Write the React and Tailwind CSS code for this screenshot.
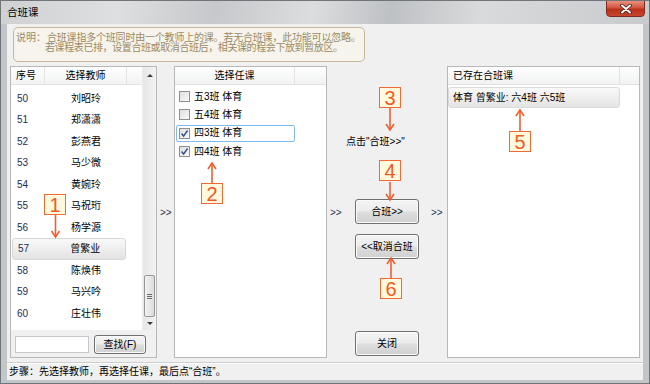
import React from "react";

const teachers = [
  ["50", "刘昭玲"],
  ["51", "郑潇潇"],
  ["52", "彭燕君"],
  ["53", "马少微"],
  ["54", "黄婉玲"],
  ["55", "马祝珩"],
  ["56", "杨学源"],
  ["57", "曾繁业"],
  ["58", "陈焕伟"],
  ["59", "马兴吟"],
  ["60", "庄壮伟"],
];

const courses = [
  { label: "五3班 体育", checked: false },
  { label: "五4班 体育", checked: false },
  { label: "四3班 体育", checked: true, focus: true },
  { label: "四4班 体育", checked: true },
];

function Btn({ children, className }) {
  return (
    <div
      className={`flex items-center justify-center rounded-[3px] border border-[#707070] bg-[linear-gradient(#f4f4f4_0%,#ececec_48%,#dedede_52%,#d0d0d0_100%)] shadow-[inset_0_0_0_1px_#fbfbfb] text-[10px] leading-none text-black ${className}`}
    >
      {children}
    </div>
  );
}

function Checkbox({ checked }) {
  return (
    <div className="w-[11px] h-[11px] border border-[#8e8f8f] bg-[linear-gradient(135deg,#e0e0e0,#f8f8f8)] flex items-center justify-center">
      {checked && (
        <svg width="9" height="9" viewBox="0 0 9 9">
          <path d="M1.5 4.5 L3.6 7 L7.6 1.5" fill="none" stroke="#30528f" strokeWidth="1.4" />
        </svg>
      )}
    </div>
  );
}

function Header({ children }) {
  return (
    <div className="h-[18px] flex bg-[linear-gradient(#ffffff,#f1f2f3)] border-b border-[#e2e2e2] text-[10px] text-black leading-none">
      {children}
    </div>
  );
}

function Callout({ n, className }) {
  return (
    <div
      className={`absolute w-[22px] h-[21px] border-[1.5px] border-[#f06a35] bg-[#fff9de] flex items-center justify-center text-[20px] leading-none text-[#f05a25] font-['Liberation_Sans',sans-serif] ${className}`}
    >
      {n}
    </div>
  );
}

function Arrow({ x, from, to }) {
  const dir = to > from ? 1 : -1;
  return (
    <g stroke="#f15f2e" strokeWidth="1.6" fill="none">
      <line x1={x} y1={from} x2={x} y2={to} />
      <polyline points={`${x - 4},${to - dir * 6} ${x},${to} ${x + 4},${to - dir * 6}`} />
    </g>
  );
}

export default function App() {
  return (
    <div className="relative w-[650px] h-[384px] overflow-hidden bg-[#c3c6c9] border border-[#70757a] font-['Liberation_Sans','Noto_Sans_CJK_SC',sans-serif] text-black">
      {/* title bar */}
      <div className="h-[23px] flex justify-between pl-[6px] pr-[4px] bg-[linear-gradient(100deg,#cfd1d3_0%,#dedfe0_18%,#c6c8cb_33%,#dcdddf_48%,#bec1c4_60%,#d9dadc_74%,#c8cacd_100%)]">
        <div className="pt-[6px] text-[10.5px] leading-none">合班课</div>
        <div className="self-start w-[39px] h-[17px] -mt-[1px] rounded-b-[4px] border border-[#7b2b20] bg-[linear-gradient(#e8917e_0%,#d3553e_45%,#b8301c_55%,#c9442c_100%)] flex items-center justify-center">
          <svg width="12" height="10" viewBox="0 0 12 10">
            <path d="M2 1.5 L10 8.5 M10 1.5 L2 8.5" stroke="#4a1c14" strokeWidth="3.6" strokeLinecap="round" />
            <path d="M2 1.5 L10 8.5 M10 1.5 L2 8.5" stroke="#ffffff" strokeWidth="2" strokeLinecap="round" />
          </svg>
        </div>
      </div>

      {/* client */}
      <div className="ml-[6px] w-[636px] h-[356px] bg-[#f0f0f0] flex flex-col">
        {/* info */}
        <div className="ml-[6px] mt-[3px] w-[352px] h-[35px] rounded-[5px] border border-[#c7b995] bg-[#f6f4ec] flex pl-[2px] pt-[5px] text-[10px] leading-[10px] text-[#9c8a64] whitespace-nowrap">
          <div className="w-[31px]">说明：</div>
          <div className="flex flex-col tracking-[-0.2px]">
            <div>合班课指多个班同时由一个教师上的课。若无合班课，此功能可以忽略。</div>
            <div className="-ml-[2px] tracking-[-0.4px]">若课程表已排，设置合班或取消合班后，相关课的程会下放到暂放区。</div>
          </div>
        </div>

        {/* main row */}
        <div className="mt-[4px] h-[292px] flex">
          {/* left panel */}
          <div className="ml-[3px] w-[147px] h-full border border-[#b8b8b8] flex flex-col">
            <div className="h-[263px] flex">
              <div className="w-[131px] bg-white flex flex-col">
                <Header>
                  <div className="w-[34px] pl-[5px] flex items-center border-r border-[#e3e3e3]">序号</div>
                  <div className="w-[82px] flex items-center justify-center border-r border-[#e3e3e3]">选择教师</div>
                  <div className="flex-1" />
                </Header>
                <div className="pt-[2.5px] flex flex-col">
                  {teachers.map(([no, name]) =>
                    no === "57" ? (
                      <div key={no} className="h-[21.5px] flex items-center ml-[1px] w-[114px] rounded-[3px] border border-[#d8d8d8] bg-[linear-gradient(#f9f9f9,#e3e3e3)]">
                        <div className="w-[33px] pl-[5px] text-[10px] text-[#1f2b52]">{no}</div>
                        <div className="w-[80px] text-center text-[10px]">{name}</div>
                      </div>
                    ) : (
                      <div key={no} className="h-[21.5px] flex items-center">
                        <div className="w-[34px] pl-[6px] text-[10px] text-[#1f2b52]">{no}</div>
                        <div className="w-[82px] text-center text-[10px]">{name}</div>
                      </div>
                    )
                  )}
                </div>
              </div>
              {/* scrollbar */}
              <div className="w-[14px] flex flex-col bg-[linear-gradient(90deg,#e6e6e6,#f3f3f3)] border-l border-[#ececec]">
                <div className="h-[16px] flex items-center justify-center">
                  <div className="w-0 h-0 border-l-[3px] border-r-[3px] border-b-[3px] border-l-transparent border-r-transparent border-b-[#3a3a3a]" />
                </div>
                <div className="h-[192px]" />
                <div className="h-[42px] mx-[1px] rounded-[2px] border border-[#979797] bg-[linear-gradient(90deg,#f2f2f2,#dcdcdc)] flex flex-col items-center justify-center gap-[1px]">
                  <div className="w-[5px] h-px bg-[#6a6a6a]" />
                  <div className="w-[5px] h-px bg-[#6a6a6a]" />
                  <div className="w-[5px] h-px bg-[#6a6a6a]" />
                </div>
                <div className="flex-1 flex items-center justify-center">
                  <div className="w-0 h-0 border-l-[3px] border-r-[3px] border-t-[3px] border-l-transparent border-r-transparent border-t-[#3a3a3a]" />
                </div>
              </div>
            </div>
            <div className="flex-1 flex items-start">
              <div className="ml-[4px] mt-[6px] w-[74px] h-[17px] border border-[#c4c7cc] bg-white" />
              <Btn className="ml-[5px] mt-[5px] w-[52px] h-[19px]">查找(F)</Btn>
            </div>
          </div>

          {/* >> */}
          <div className="w-[17px] pl-[3px] pt-[142px] text-[10px] leading-[10px] text-[#2a3550]">&gt;&gt;</div>

          {/* middle panel */}
          <div className="w-[153px] h-full border border-[#b8b8b8] bg-white flex flex-col">
            <Header>
              <div className="w-[120px] flex items-center justify-center border-r border-[#e3e3e3]">选择任课</div>
              <div className="flex-1" />
            </Header>
            <div className="pt-[2.5px] flex flex-col">
              {courses.map((c) => (
                <div key={c.label} className="h-[18.3px] flex items-center">
                  <div
                    className={`ml-px w-[119px] h-[17px] rounded-[2px] border pl-[2px] flex items-center gap-[4px] ${
                      c.focus ? "border-[#84b9ec]" : "border-transparent"
                    }`}
                  >
                    <Checkbox checked={c.checked} />
                    <span className="text-[10px] leading-none">{c.label}</span>
                  </div>
                </div>
              ))}
            </div>
          </div>

          {/* buttons column */}
          <div className="w-[120px] h-full flex">
            <div className="w-[28px] pl-[3px] pt-[142px] text-[10px] leading-[10px] text-[#2a3550]">&gt;&gt;</div>
            <div className="w-[64px] flex flex-col">
              <div className="mt-[70px] h-[12px] -ml-[9px] whitespace-nowrap text-[10px] leading-[12px]">点击"合班&gt;&gt;"</div>
              <Btn className="mt-[51px] h-[25px]">合班&gt;&gt;</Btn>
              <Btn className="mt-[10px] h-[25px]">&lt;&lt;取消合班</Btn>
              <Btn className="mt-[72px] h-[25px]">关闭</Btn>
            </div>
            <div className="ml-[12px] pt-[142px] text-[10px] leading-[10px] text-[#2a3550]">&gt;&gt;</div>
          </div>

          {/* right panel */}
          <div className="w-[193px] h-full border border-[#b8b8b8] bg-white flex flex-col">
            <Header>
              <div className="w-[172px] pl-[5px] flex items-center border-r border-[#e3e3e3]">已存在合班课</div>
              <div className="flex-1" />
            </Header>
            <div className="mt-[2px] w-[172px] h-[21px] rounded-[3px] border border-[#dadada] bg-[linear-gradient(#f9f9f9,#e4e4e4)] flex items-center pl-[4px] text-[10px] leading-none">
              体育 曾繁业: 六4班 六5班
            </div>
          </div>
        </div>

        {/* status bar */}
        <div className="mt-[4px] flex-1 border-t border-[#cdcdcd] shadow-[inset_0_1px_0_#ffffff] flex items-center pl-[2px] text-[10px] leading-none">
          步骤：先选择教师，再选择任课，最后点“合班”。
        </div>
      </div>

      {/* callouts */}
      <svg className="absolute left-0 top-0 pointer-events-none" width="650" height="384">
        <Arrow x={54.5} from={214} to={236} />
        <Arrow x={211} from={182} to={162} />
        <Arrow x={389} from={107} to={129} />
        <Arrow x={389} from={181} to={199} />
        <Arrow x={519} from={130} to={109} />
        <Arrow x={390} from={277} to={257} />
      </svg>
      <Callout n="1" className="left-[43px] top-[193px]" />
      <Callout n="2" className="left-[200px] top-[182px]" />
      <Callout n="3" className="left-[378px] top-[86px]" />
      <Callout n="4" className="left-[378px] top-[159px]" />
      <Callout n="5" className="left-[508px] top-[130px]" />
      <Callout n="6" className="left-[379px] top-[277px]" />
    </div>
  );
}
